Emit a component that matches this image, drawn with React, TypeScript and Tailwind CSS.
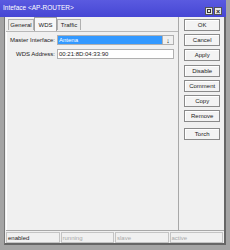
const font = { fontFamily: '"Liberation Sans", Arial, sans-serif' };

function Btn({ label }: { label: string }) {
  return (
    <div className="flex h-[12px] w-[36px] items-center justify-center border border-[#8a8a8a] bg-[#f3f3f3] text-[6px] leading-none text-[#222] shadow-[inset_1px_1px_0_#fff]">
      {label}
    </div>
  );
}

function Cell({ label, active }: { label: string; active?: boolean }) {
  return (
    <div
      className={`flex h-full flex-1 items-center border border-[#c4c4c4] px-[1px] text-[6px] leading-none ${active ? "text-[#222]" : "text-[#a8a8a8]"}`}
    >
      {label}
    </div>
  );
}

export default function App() {
  return (
    <div className="flex h-[250px] w-[230px] flex-col bg-[#a4a4a4]" style={font}>
      <div className="flex h-[17px] w-[226px] shrink-0 items-center justify-between bg-gradient-to-b from-[#5a5ae0] to-[#4646d4] pl-[3px] pr-[4px]">
        <span className="text-[6.5px] leading-none text-white">Inteface &lt;AP-ROUTER&gt;</span>
        <div className="mt-[5px] flex gap-[1px]">
          <div className="flex h-[8px] w-[8px] items-center justify-center border border-[#555] bg-[#e8e8e8]">
            <div className="h-[4px] w-[4px] border border-[#333]" />
          </div>
          <div className="flex h-[8px] w-[8px] items-center justify-center border border-[#555] bg-[#e8e8e8] text-[7px] leading-none font-bold text-[#222]">
            ×
          </div>
        </div>
      </div>
      <div className="ml-[4px] mr-[4px] mb-[5px] flex flex-1 flex-col border-l border-l-[#777] border-r-2 border-r-[#666] border-b-2 border-b-[#666] bg-[#f0f0f0] pl-[1px]">
        <div className="flex flex-1">
          <div className="flex w-[175px] flex-col border-r border-r-[#a8a8a8]">
            <div className="flex h-[14px] items-end pl-[2px]">
              <div className="mb-[1px] flex h-[11px] w-[26px] items-center justify-center border border-b-0 border-[#b0b0b0] bg-[#ececec] text-[6px] leading-none text-[#222]">
                General
              </div>
              <div className="flex h-[14px] w-[23px] items-center justify-center border border-b-0 border-[#a0a0a0] bg-[#f7f7f7] text-[6px] leading-none text-[#222]">
                WDS
              </div>
              <div className="mb-[1px] flex h-[11px] w-[24px] items-center justify-center border border-b-0 border-[#b0b0b0] bg-[#ececec] text-[6px] leading-none text-[#222]">
                Traffic
              </div>
            </div>
            <div className="flex flex-1 flex-col gap-[4px] border-t border-t-[#b8b8b8] pt-[3px] shadow-[inset_1px_0_0_#fff]">
              <div className="flex h-[10px] items-center">
                <div className="w-[51px] pr-[2px] text-right text-[6px] leading-none text-[#222]">Master Interface:</div>
                <div className="flex h-[10px] w-[117px] border border-[#b0b0b0] bg-white">
                  <div className="flex flex-1 items-center bg-[#3399ff] pl-[1px] text-[6px] leading-none text-white">Antena</div>
                  <div className="flex w-[11px] items-center justify-center border-l border-[#b0b0b0] bg-[#f0f0f0] text-[7px] font-bold leading-none text-[#111]">
                    ↓
                  </div>
                </div>
              </div>
              <div className="flex h-[10px] items-center">
                <div className="w-[51px] pr-[2px] text-right text-[6px] leading-none text-[#222]">WDS Address:</div>
                <div className="flex h-[10px] w-[117px] items-center border border-[#b0b0b0] bg-white pl-[1px] text-[6px] leading-none text-[#222]">
                  00:21:8D:04:33:90
                </div>
              </div>
            </div>
          </div>
          <div className="flex w-[45px] flex-col items-center gap-[3px] pl-[1px] pt-[2px]">
            <Btn label="OK" />
            <Btn label="Cancel" />
            <Btn label="Apply" />
            <div className="mt-[1px] flex flex-col gap-[3px]">
              <Btn label="Disable" />
              <Btn label="Comment" />
              <Btn label="Copy" />
              <Btn label="Remove" />
            </div>
            <div className="mt-[3px]">
              <Btn label="Torch" />
            </div>
          </div>
        </div>
        <div className="flex h-[13px] shrink-0 gap-[1px] border-t border-t-[#a8a8a8] pt-[1px] pr-[1px]">
          <Cell label="enabled" active />
          <Cell label="running" />
          <Cell label="slave" />
          <Cell label="active" />
        </div>
      </div>
    </div>
  );
}
